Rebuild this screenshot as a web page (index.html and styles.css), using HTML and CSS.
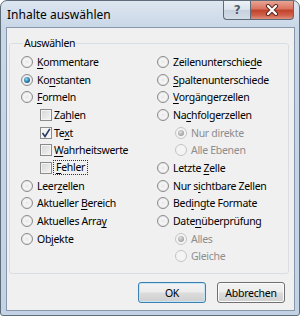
FILE: index.html
```html
<!DOCTYPE html>
<html lang="de">
<head>
    <meta charset="UTF-8">
    <title>Inhalte auswählen</title>
    <link rel="stylesheet" href="styles.css">
</head>
<body>
    <div class="window">
        <div class="titlebar">
            <span class="title">Inhalte auswählen</span>
            <div class="caption">
                <span class="cap-help">?</span>
                <span class="cap-close">
                    <svg width="14" height="12" viewBox="0 0 14 12">
                        <path d="M3 2 L11 10 M11 2 L3 10" stroke="#5b2a22" stroke-width="4.2" stroke-linecap="round"/>
                        <path d="M3 2 L11 10 M11 2 L3 10" stroke="#fff" stroke-width="2.2" stroke-linecap="round"/>
                    </svg>
                </span>
            </div>
        </div>

        <div class="client">
            <fieldset class="group">
                <legend>Auswählen</legend>
                <div class="columns">
                    <div class="col">
                        <div class="row"><span class="radio"></span><span><u>K</u>ommentare</span></div>
                        <div class="row"><span class="radio checked"></span><span>Ko<u>n</u>stanten</span></div>
                        <div class="row"><span class="radio"></span><span><u>F</u>ormeln</span></div>
                        <div class="row sub"><span class="check"></span><span>Za<u>h</u>len</span></div>
                        <div class="row sub"><span class="check checked"><svg width="10" height="10" viewBox="0 0 10 10"><path d="M1.5 5 L4 8.5 L8.8 0.8" fill="none" stroke="#2b3b63" stroke-width="1.6"/></svg></span><span>Te<u>x</u>t</span></div>
                        <div class="row sub"><span class="check"></span><span><u>W</u>ahrheitswerte</span></div>
                        <div class="row sub"><span class="check"></span><span class="focus"><u>F</u>ehler</span></div>
                        <div class="row"><span class="radio"></span><span>Leer<u>z</u>ellen</span></div>
                        <div class="row"><span class="radio"></span><span>Aktueller <u>B</u>ereich</span></div>
                        <div class="row"><span class="radio"></span><span>Aktuelles Arra<u>y</u></span></div>
                        <div class="row"><span class="radio"></span><span>Ob<u>j</u>ekte</span></div>
                    </div>
                    <div class="col">
                        <div class="row"><span class="radio"></span><span>Zeilenunterschie<u>d</u>e</span></div>
                        <div class="row"><span class="radio"></span><span><u>S</u>paltenunterschiede</span></div>
                        <div class="row"><span class="radio"></span><span><u>V</u>orgängerzellen</span></div>
                        <div class="row"><span class="radio"></span><span>Na<u>c</u>hfolgerzellen</span></div>
                        <div class="row sub disabled"><span class="radio checked"></span><span>Nur direkte</span></div>
                        <div class="row sub disabled"><span class="radio"></span><span>Alle Ebenen</span></div>
                        <div class="row"><span class="radio"></span><span>Letzte <u>Z</u>elle</span></div>
                        <div class="row"><span class="radio"></span><span>Nur s<u>i</u>chtbare Zellen</span></div>
                        <div class="row"><span class="radio"></span><span>Bed<u>i</u>ngte Formate</span></div>
                        <div class="row"><span class="radio"></span><span>Date<u>n</u>überprüfung</span></div>
                        <div class="row sub disabled"><span class="radio checked"></span><span>Alles</span></div>
                        <div class="row sub disabled"><span class="radio"></span><span>Gleiche</span></div>
                    </div>
                </div>
            </fieldset>

            <div class="buttons">
                <button class="default">OK</button>
                <button>Abbrechen</button>
            </div>
        </div>
    </div>
</body>
</html>
```

FILE: styles.css
```css
body {
    margin: 0;
    background: #fff;
    font-family: "Noto Sans", "DejaVu Sans", sans-serif;
    font-size: 10px;
    letter-spacing: -0.3px;
    color: #000;
}
.window {
    width: 300px;
    height: 316px;
    box-sizing: border-box;
    border: 1px solid #5f6c7a;
    border-radius: 7px 7px 3px 3px;
    background: linear-gradient(#dde6f0, #c9d7e7 26px, #c3d3e5);
    display: flex;
    flex-direction: column;
}
.titlebar {
    height: 26px;
    display: flex;
    justify-content: space-between;
    align-items: flex-start;
}
.title {
    font-size: 12px;
    letter-spacing: 0;
    line-height: 14px;
    padding: 7px 0 0 6px;
}
.caption {
    display: flex;
    margin-right: 5px;
}
.cap-help,
.cap-close {
    height: 19px;
    box-sizing: border-box;
    border: 1px solid #5e6a78;
    border-top: none;
    display: flex;
    align-items: center;
    justify-content: center;
}
.cap-help {
    width: 27px;
    border-right: none;
    border-radius: 0 0 0 4px;
    background: linear-gradient(#eef2f7, #d9e1ea 50%, #c6d1dd 51%, #d3dde8);
    font-family: "DejaVu Sans", sans-serif;
    font-size: 12px;
    font-weight: bold;
    color: #4e5a66;
    text-shadow: 0 0 1px #fff;
}
.cap-close {
    width: 44px;
    border-radius: 0 0 4px 0;
    background: linear-gradient(#e8a493, #d8735f 45%, #c2412a 50%, #d0614c 80%, #e0907d);
}
.client {
    margin-left: 5px;
    width: 289px;
    height: 284px;
    box-sizing: border-box;
    border: 1px solid #8798ac;
    background: #f0f0f0;
}
.group {
    margin: 8px 5px 0 2px;
    padding: 3px 0 0 11px;
    height: 238px;
    box-sizing: border-box;
    border: 1px solid #d9dee3;
    border-radius: 3px;
}
.group legend {
    margin-left: 2px;
    padding: 0 1px;
    font-size: 10.5px;
    line-height: 14px;
}
.columns {
    display: grid;
    grid-template-columns: 136px 1fr;
}
.row {
    height: 17.7px;
    display: flex;
    align-items: center;
    white-space: nowrap;
    font-size: 10.5px;
}
.row.sub {
    padding-left: 19px;
}
.col:last-child .row.sub {
    padding-left: 18px;
}
.row u {
    text-decoration-thickness: 1px;
    text-underline-offset: 2px;
}
.radio {
    width: 12px;
    height: 12px;
    margin-right: 4px;
    box-sizing: border-box;
    border: 1px solid #8b8b8b;
    border-radius: 50%;
    background: radial-gradient(circle at 50% 50%, #e7e7e7 0, #f6f6f6 45%, #d3d3d3 100%);
    display: flex;
    align-items: center;
    justify-content: center;
    flex-shrink: 0;
}
.radio.checked::after {
    content: "";
    width: 6px;
    height: 6px;
    border-radius: 50%;
    background: radial-gradient(circle at 40% 35%, #9ad8f2, #2a78a8 55%, #123e5e);
}
.check {
    width: 12px;
    height: 12px;
    margin-right: 2px;
    box-sizing: border-box;
    border: 1px solid #8b8b8b;
    background: linear-gradient(135deg, #d6d6d6, #f4f4f4);
    box-shadow: inset 0 0 0 1px #f4f4f4;
    display: flex;
    align-items: center;
    justify-content: center;
    flex-shrink: 0;
}
.check.checked {
    background: #f4f4f4;
}
.focus {
    padding: 0 2px;
    outline: 1px dotted #333;
    line-height: 13px;
}
.disabled {
    color: #8d8d8d;
}
.disabled .radio {
    border-color: #c4c4c4;
    background: #f4f4f4;
}
.disabled .radio.checked::after {
    background: radial-gradient(circle at 40% 35%, #e0e0e0, #a9a9a9 60%, #8e8e8e);
}
.buttons {
    display: flex;
    justify-content: flex-end;
    gap: 11px;
    margin-top: 8px;
    padding-right: 9px;
}
button {
    width: 68px;
    height: 21px;
    padding: 0;
    font-family: inherit;
    font-size: 10.5px;
    letter-spacing: -0.25px;
    color: #000;
    border: 1px solid #707070;
    border-radius: 3px;
    background: linear-gradient(#f3f3f3, #ececec 48%, #dcdcdc 52%, #cfcfcf);
    box-shadow: inset 0 0 0 1px #fbfbfb;
}
button.default {
    border-color: #3c7fb1;
    box-shadow: inset 0 0 0 1px #c4e5f6;
}
```
